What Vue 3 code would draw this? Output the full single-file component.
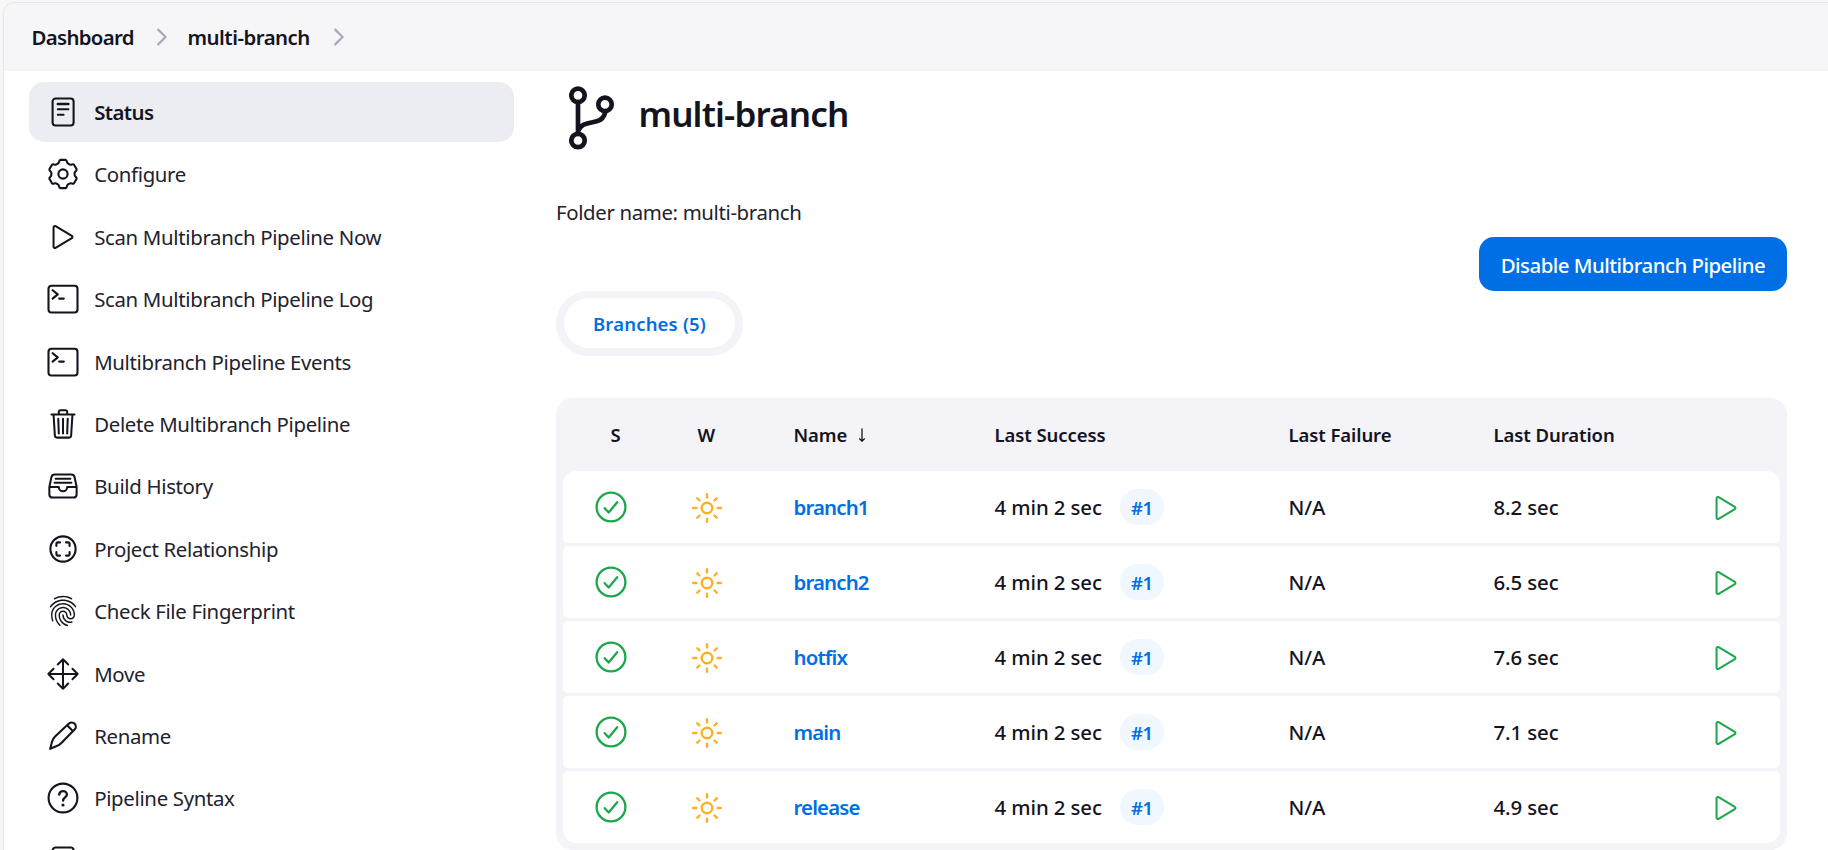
<script setup>
const doc =
  '<rect x="4.6" y="1.500" width="21" height="27" rx="3"/><path d="M9.800 7h10.600" stroke-width="2.500"/><path d="M9.800 12.300h10.600M9.800 17.800h5.800" stroke-width="2"/>'
const terminal =
  '<rect x="0.500" y="1.700" width="29" height="26.800" rx="3"/><path d="M4.600 6.200l5.200 4.200-5.200 4.200M11.200 14.600h4.600"/>'

// Six-lobed gear outline around (15, 15)
function gearPath() {
  const at = (deg, r) => {
    const a = (deg * Math.PI) / 180
    return `${(15 + r * Math.sin(a)).toFixed(2)} ${(15 - r * Math.cos(a)).toFixed(2)}`
  }
  let d = ''
  for (let i = 0; i < 6; i++) {
    const t = i * 60
    d += `${i ? 'L' : 'M'}${at(t - 11, 14.4)}L${at(t + 11, 14.4)}Q${at(t + 15, 14.2)} ${at(t + 17, 13.1)}`
    d += `Q${at(t + 21, 11.4)} ${at(t + 30, 11.6)}Q${at(t + 39, 11.4)} ${at(t + 43, 13.1)}Q${at(t + 45, 14.2)} ${at(t + 49, 14.4)}`
  }
  return d + 'Z'
}

const gear = `<path d="${gearPath()}"/><circle cx="15" cy="15" r="4.600"/>`
const play =
  '<g transform="translate(-1.800 -1.800) scale(.0656)" stroke-width="31"><path d="M112 111v290c0 17.440 17 28.520 31 20.160l247.900-148.370c12.120-7.250 12.120-26.330 0-33.580L143 90.840c-14-8.360-31 2.720-31 20.160z"/></g>'
const trash =
  '<g transform="translate(-1.800 -1.800) scale(.0656)" stroke-width="31"><path d="M112 112l20 320c.950 18.490 14.400 32 32 32h184c17.670 0 30.870-13.510 32-32l20-320M80 112h352M192 112V72a23.930 23.930 0 0124-24h80a23.930 23.930 0 0124 24v40M256 176v224M184 176l8 224M328 176l-8 224"/></g>'
const tray =
  '<g transform="translate(-1.800 -1.800) scale(.0656)" stroke-width="31"><path d="M384 80H128c-26 0-43 14-48 40L48 272v112a48.140 48.140 0 0048 48h320a48.140 48.140 0 0048-48V272l-32-152c-5-27-23-40-48-40zM48 272h144M320 272h144M192 272a64 64 0 00128 0M144 144h224M128 208h256"/></g>'
const relation =
  '<circle cx="15" cy="15" r="12.600"/><path d="M8.400 12V9.900a1.500 1.500 0 011.500-1.500H12M18 8.400h2.100a1.500 1.500 0 011.500 1.500V12M21.600 18v2.100a1.500 1.500 0 01-1.500 1.500H18M12 21.600H9.900a1.500 1.500 0 01-1.500-1.500V18"/>'
const finger =
  '<g transform="translate(-1.200 -1.300) scale(.0635)" fill="currentColor" stroke="none"><path d="M390.42 75.28a10.45 10.45 0 01-5.32-1.44C340.72 50.08 302.35 40 256.35 40c-45.77 0-89.23 11.28-128.76 33.84C122 77 115.11 74.8 111.87 69a12.4 12.4 0 014.63-16.32A281.81 281.81 0 01256.35 16c49.23 0 92.23 11.28 139.39 36.48a12 12 0 014.85 16.08 11.3 11.3 0 01-10.17 6.72zm-330.79 126a11.73 11.73 0 01-6.7-2.16 12.26 12.26 0 01-2.78-16.8c22.89-33.6 52-60 86.69-78.48 72.58-38.88 165.51-39.12 238.32-.24 34.68 18.48 63.8 44.64 86.69 78a12.29 12.29 0 01-2.78 16.8 11.26 11.26 0 01-16.18-2.88c-20.8-30.24-47.15-54-78.36-70.56-66.34-35.28-151.18-35.28-217.29.24-31.44 16.8-57.79 40.8-78.59 71a10 10 0 01-9.02 5.08zM204.1 491a10.66 10.66 0 01-8.09-3.6C175.9 466.48 165 453 149.55 424c-16-29.52-24.27-65.52-24.27-104.16 0-71.28 58.71-129.36 130.84-129.36S387 248.56 387 319.84a11.56 11.56 0 11-23.11 0c0-58.08-48.32-105.36-107.72-105.36S148.4 261.76 148.4 319.84c0 34.56 7.39 66.48 21.49 92.4 14.8 27.6 25 39.36 42.77 58.08a12.67 12.67 0 010 17 12.44 12.44 0 01-8.56 3.68zm165.75-44.4c-27.51 0-51.78-7.2-71.66-21.36a129.1 129.1 0 01-55-105.36 11.57 11.57 0 1123.12 0 104.28 104.28 0 0044.84 85.44c16.41 11.52 35.6 17 58.72 17a147.41 147.41 0 0024-2.4c6.24-1.2 12.25 3.12 13.4 9.84a11.92 11.92 0 01-9.47 13.92 152.28 152.28 0 01-27.95 2.88zM323.38 496a13 13 0 01-3-.48c-36.76-10.56-60.8-24.72-86-50.4-32.37-33.36-50.16-77.76-50.16-125.28 0-38.88 31.9-70.56 71.19-70.56s71.2 31.68 71.2 70.56c0 25.68 21.5 46.56 48.08 46.56s48.08-20.88 48.08-46.56c0-90.48-75.13-163.92-167.59-163.92-65.65 0-125.75 37.92-152.79 96.72-9 19.44-13.64 42.24-13.64 67.2 0 18.72 1.61 48.24 15.48 86.64 2.32 6.24-.69 13.2-6.7 15.36a11.34 11.34 0 01-14.79-7 276.39 276.39 0 01-16.88-95c0-28.8 5.32-55 15.72-77.76 30.75-67.2 98.94-110.64 173.6-110.64 105.18 0 190.71 84.24 190.71 187.92 0 38.88-31.9 70.56-71.2 70.56s-71.2-31.68-71.2-70.56c.01-25.68-21.49-46.6-48.07-46.6s-48.08 20.88-48.08 46.56c0 41 15.26 79.44 43.23 108.24 22 22.56 43 35 75.59 44.16 6.24 1.68 9.94 8.4 8.32 14.64a11.72 11.72 0 01-11.1 8.88z"/></g>'
const move =
  '<g transform="translate(-1.800 -1.800) scale(.0656)" stroke-width="30"><path d="M176 112l80-80 80 80M256 32v448M176 400l80 80 80-80M400 176l80 80-80 80M112 176l-80 80 80 80M32 256h448"/></g>'
const pencil =
  '<path d="M2.200 27.800l1.900-7.400c.5-1.900 1.600-3.600 3-5L20.900 2.600c1.700-1.500 4.300-1.400 5.800.2s1.500 4.100-.1 5.700L13.100 22.200c-1.400 1.400-3.100 2.500-5 3zM19.400 4.500l5.600 5.800"/>'
const help =
  '<circle cx="15" cy="15" r="14.400"/><path d="M11.200 11.600c.2-2.100 1.800-3.500 3.900-3.500s3.800 1.500 3.800 3.400c0 2.900-3.800 3.100-3.800 6.200" stroke-width="2.300"/><circle cx="15" cy="22" r="1.600" fill="currentColor" stroke="none"/>'

const tasks = [
  { label: 'Status', icon: doc, active: true },
  { label: 'Configure', icon: gear },
  { label: 'Scan Multibranch Pipeline Now', icon: play },
  { label: 'Scan Multibranch Pipeline Log', icon: terminal },
  { label: 'Multibranch Pipeline Events', icon: terminal },
  { label: 'Delete Multibranch Pipeline', icon: trash },
  { label: 'Build History', icon: tray },
  { label: 'Project Relationship', icon: relation },
  { label: 'Check File Fingerprint', icon: finger },
  { label: 'Move', icon: move },
  { label: 'Rename', icon: pencil },
  { label: 'Pipeline Syntax', icon: help },
  { label: '', icon: doc },
]

const branches = [
  { name: 'branch1', duration: '8.2 sec' },
  { name: 'branch2', duration: '6.5 sec' },
  { name: 'hotfix', duration: '7.6 sec' },
  { name: 'main', duration: '7.1 sec' },
  { name: 'release', duration: '4.9 sec' },
]
</script>

<template>
  <div class="window">
    <div class="page">
      <nav class="crumbs">
        <span class="crumb first">Dashboard</span>
        <svg class="chev" viewBox="0 0 10 18"><path d="M1.2 1.6L8.6 9l-7.4 7.4" /></svg>
        <span class="crumb second">multi-branch</span>
        <svg class="chev" viewBox="0 0 10 18"><path d="M1.2 1.6L8.6 9l-7.4 7.4" /></svg>
      </nav>
      <div class="body">
        <aside class="side">
          <a v-for="(t, i) in tasks" :key="i" class="task" :class="{ active: t.active }">
            <svg class="task-icon" viewBox="0 0 30 30" v-html="t.icon"></svg>
            <span class="task-label">{{ t.label }}</span>
          </a>
        </aside>
        <main class="main">
          <header class="head">
            <svg class="branch-icon" viewBox="0 0 46 64">
              <circle cx="9" cy="9.3" r="6.7" />
              <circle cx="9" cy="54.500" r="6.7" />
              <circle cx="36" cy="18.400" r="6.7" />
              <path d="M9 16v31.600M36.500 25.500c-1.200 5.500-4 8.800-8.700 9.800l-9.600 2.200c-5.200 1.200-8.700 4-9.200 9.500" />
            </svg>
            <h1>multi-branch</h1>
          </header>
          <p class="folder">Folder name: multi-branch</p>
          <div class="actions"><button class="disable">Disable Multibranch Pipeline</button></div>
          <div class="tabs"><a class="tab">Branches (5)</a></div>
          <section class="table">
            <div class="row thead">
              <span class="c-s">S</span>
              <span class="c-w">W</span>
              <span>Name
                <svg class="sort" viewBox="0 0 8 14"><path d="M4 .5v12.500M1.300 10.500L4 13.200l2.700-2.700" /></svg>
              </span>
              <span>Last Success</span>
              <span>Last Failure</span>
              <span>Last Duration</span>
              <span></span>
            </div>
            <div class="rows">
              <div v-for="b in branches" :key="b.name" class="row item">
                <svg class="ok" viewBox="0 0 32 32">
                  <circle cx="16" cy="16" r="14.400" />
                  <path d="M9.700 17.200l4 4.300 8.500-10.300" />
                </svg>
                <svg class="sun" viewBox="0 0 512 512">
                  <path d="M256 48v48M256 416v48M403.080 108.920l-33.940 33.940M142.860 369.140l-33.940 33.940M464 256h-48M96 256H48M403.080 403.080l-33.940-33.940M142.860 142.860l-33.940-33.940" />
                  <circle cx="256" cy="256" r="80" />
                </svg>
                <a class="link">{{ b.name }}</a>
                <span class="success">4 min 2 sec <a class="badge">#1</a></span>
                <span>N/A</span>
                <span>{{ b.duration }}</span>
                <svg class="run" viewBox="0 0 30 30" v-html="play"></svg>
              </div>
            </div>
          </section>
        </main>
      </div>
    </div>
  </div>
</template>

<style>
body {
  margin: 0;
  overflow: hidden;
}
</style>

<style scoped>
.window {
  box-sizing: border-box;
  height: 850px;
  padding: 2px 0 0 3px;
  overflow: hidden;
  background: #f7f7f7;
  color: #14141f;
  font-family: "Noto Sans", "Open Sans", sans-serif;
  font-size: 20.4px;
}
.page {
  box-sizing: border-box;
  height: 860px;
  border: 1px solid #e6e6e6;
  border-right: 0;
  border-radius: 12px 0 0 0;
  background: #fff;
  overflow: hidden;
}
.crumbs {
  display: flex;
  align-items: center;
  box-sizing: border-box;
  height: 68px;
  padding-left: 27.500px;
  background: #f6f6f8;
  font-weight: 600;
}
.crumb {
  flex: none;
  line-height: 28px;
  white-space: nowrap;
}
.crumb.first {
  width: 125px;
  letter-spacing: -0.67px;
}
.crumb.second {
  width: 146px;
  margin-left: 21px;
  letter-spacing: -0.5px;
}
.chev {
  flex: none;
  width: 10px;
  height: 18px;
  fill: none;
  stroke: #a9a9bb;
  stroke-width: 2.2;
  stroke-linecap: round;
  stroke-linejoin: round;
}
.body {
  display: flex;
  padding: 11px 41px 0 25px;
}
.side {
  display: flex;
  flex: none;
  flex-direction: column;
  gap: 2.4px;
  width: 485px;
}
.task {
  display: flex;
  align-items: center;
  box-sizing: border-box;
  height: 60px;
  padding-left: 18.600px;
  gap: 16.600px;
  border-radius: 15px;
  letter-spacing: -0.33px;
  white-space: nowrap;
}
.task-label {
  color: #22222d;
}
.task.active {
  background: #ecedf3;
  font-weight: 600;
  letter-spacing: -0.6px;
}
.task.active .task-label {
  color: #14141f;
}
.task-icon {
  flex: none;
  width: 30px;
  height: 30px;
  overflow: visible;
  fill: none;
  stroke: currentColor;
  stroke-width: 2.1;
  stroke-linecap: round;
  stroke-linejoin: round;
}
.main {
  flex: 1;
  min-width: 0;
  margin-left: 42px;
}
.head {
  display: flex;
  align-items: center;
  height: 72px;
  padding-left: 13.400px;
}
.branch-icon {
  width: 46px;
  height: 64px;
  fill: none;
  stroke: currentColor;
  stroke-width: 4.700;
  stroke-linecap: round;
}
h1 {
  margin: -9px 0 0 23px;
  font-size: 35px;
  font-weight: 600;
  letter-spacing: -0.85px;
  line-height: 48px;
}
.folder {
  margin: 43px 0 0;
  color: #22222d;
  line-height: 30px;
  letter-spacing: -0.36px;
}
.actions {
  display: flex;
  justify-content: flex-end;
  margin-top: 10px;
}
.disable {
  width: 308px;
  height: 54px;
  padding: 1px 0 0;
  border: 0;
  border-radius: 15px;
  background: #006fe6;
  color: #fff;
  font: inherit;
  font-weight: 500;
  letter-spacing: -0.5px;
  white-space: nowrap;
}
.tabs {
  box-sizing: border-box;
  width: 187px;
  height: 65px;
  padding: 7px 8px 8px;
  border-radius: 33px;
  background: #f3f3f8;
}
.tab {
  display: flex;
  align-items: center;
  justify-content: center;
  height: 50px;
  border-radius: 25px;
  background: #fff;
  color: #006fe6;
  font-size: 18.500px;
  font-weight: 600;
  letter-spacing: 0.18px;
}
.table {
  box-sizing: border-box;
  margin-top: 42px;
  padding: 0 7px 7px;
  border-radius: 17px;
  background: #f3f3f8;
  font-weight: 500;
}
.row {
  display: grid;
  grid-template-columns: 96px 134.500px 201px 294px 205px 217px 1fr;
  align-items: center;
  letter-spacing: -0.1px;
  white-space: nowrap;
}
.thead {
  height: 73px;
  font-size: 18.500px;
  font-weight: 600;
  letter-spacing: -0.08px;
}
.c-s {
  padding-left: 47.500px;
}
.c-w {
  padding-left: 38.500px;
}
.sort {
  width: 8px;
  height: 14px;
  margin-left: 6px;
  fill: none;
  stroke: currentColor;
  stroke-width: 1.300;
}
.rows {
  display: flex;
  flex-direction: column;
  gap: 3px;
}
.item {
  height: 72px;
  border-radius: 5px;
  background: #fff;
}
.item:first-child {
  border-radius: 13px 13px 5px 5px;
}
.item:last-child {
  border-radius: 5px 5px 13px 13px;
}
.ok {
  width: 32px;
  height: 32px;
  margin-left: 32px;
  fill: none;
  stroke: #1ea64b;
  stroke-width: 2.300;
  stroke-linecap: round;
  stroke-linejoin: round;
}
.sun {
  width: 34px;
  height: 34px;
  margin: 1px 0 0 31px;
  fill: none;
  stroke: #ffb020;
  stroke-width: 36;
  stroke-linecap: round;
}
.link {
  color: #006fe6;
  font-weight: 600;
  letter-spacing: -0.85px;
}
.success {
  display: flex;
  align-items: center;
}
.badge {
  display: flex;
  align-items: center;
  justify-content: center;
  width: 44px;
  height: 36px;
  margin-left: 18px;
  border-radius: 18px;
  background: #f1f7fe;
  color: #006fe6;
  font-size: 18.500px;
  font-weight: 600;
  letter-spacing: -0.5px;
}
.run {
  width: 30px;
  height: 30px;
  margin-top: 1px;
  overflow: visible;
  fill: none;
  stroke: #1ea64b;
  stroke-linecap: round;
  stroke-linejoin: round;
}
</style>
